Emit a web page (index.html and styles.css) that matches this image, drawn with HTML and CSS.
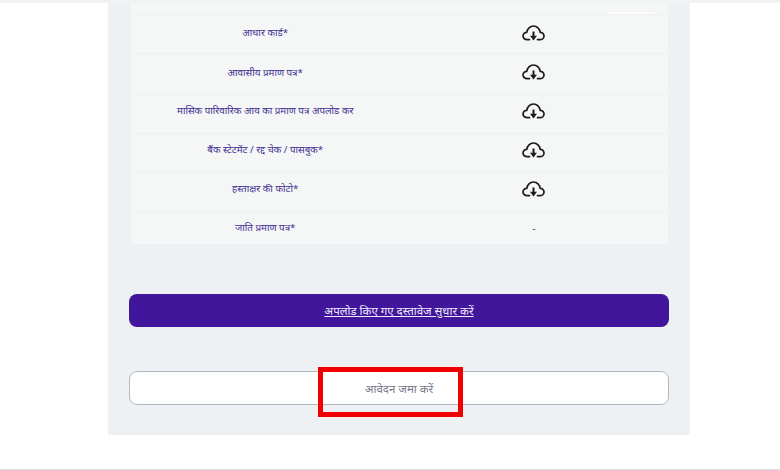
FILE: index.html
```html
<!DOCTYPE html>
<html lang="hi">
<head>
<meta charset="utf-8">
<title>दस्तावेज़</title>
<link rel="stylesheet" href="styles.css">
</head>
<body>
<svg class="defs" width="0" height="0" aria-hidden="true">
  <symbol id="cloud" viewBox="0 0 23 17">
    <path d="M7.5 14.6H5.2C2.7 14.6 1 12.9 1 10.9C1 8.8 2.7 7.2 4.9 7.3C5.2 3.7 8 1 11.5 1C15 1 17.8 3.7 18.1 7.3C20.3 7.2 22 8.8 22 10.9C22 12.9 20.3 14.6 17.8 14.6H15.5" fill="none" stroke="#1c1c1c" stroke-width="1.7" stroke-linecap="round" stroke-linejoin="round"/>
    <path d="M11.5 6.5V12" fill="none" stroke="#1c1c1c" stroke-width="2"/>
    <path d="M8 10.8H15L11.5 15.4Z" fill="#1c1c1c"/>
  </symbol>
</svg>
<div class="topline"></div>
<main class="panel">
  <section class="table">
    <div class="head"><span class="head-mark"></span></div>
    <div class="row r1"><div class="label">आधार कार्ड*</div><div class="value"><svg class="icon"><use href="#cloud"/></svg></div></div>
    <div class="row r2"><div class="label">आवासीय प्रमाण पत्र*</div><div class="value"><svg class="icon"><use href="#cloud"/></svg></div></div>
    <div class="row"><div class="label">मासिक पारिवारिक आय का प्रमाण पत्र अपलोड कर</div><div class="value"><svg class="icon"><use href="#cloud"/></svg></div></div>
    <div class="row"><div class="label">बैंक स्टेटमेंट / रद्द चेक / पासबुक*</div><div class="value"><svg class="icon"><use href="#cloud"/></svg></div></div>
    <div class="row"><div class="label">हस्ताक्षर की फोटो*</div><div class="value"><svg class="icon"><use href="#cloud"/></svg></div></div>
    <div class="row last"><div class="label">जाति प्रमाण पत्र*</div><div class="value dash">-</div></div>
  </section>
  <a class="btn primary" href="#">अपलोड किए गए दस्तावेज सुधार करें</a>
  <div class="submit-wrap">
    <button class="btn outline" type="button">आवेदन जमा करें</button>
    <div class="highlight"></div>
  </div>
</main>
</body>
</html>
```
FILE: styles.css
```css
* { box-sizing: border-box; }
html, body { margin: 0; padding: 0; }
body {
  width: 780px;
  height: 470px;
  overflow: hidden;
  background: #fff;
  border-bottom: 1px solid #d9dbe0;
  font-family: "Noto Sans", "Noto Sans Devanagari", "Lohit Devanagari", "Liberation Sans", sans-serif;
}
.defs { position: absolute; }
.topline { height: 3px; background: #f1f2f3; }
.panel {
  width: 582px;
  height: 432px;
  margin-left: 108px;
  padding: 0 21px;
  background: #edf1f4;
}
.table {
  margin: 0 1px 0 2px;
  background: #f5f6f6;
  height: 241px;
}
.head {
  display: flex;
  justify-content: flex-end;
  align-items: flex-end;
  height: 11px;
  padding-right: 13px;
}
.head-mark { width: 50px; height: 1px; background: #fdfdfd; }
.row {
  display: grid;
  grid-template-columns: 1fr 1fr;
  align-items: center;
  height: 39px;
  padding-bottom: 6px;
  border-top: 1px solid #eeefef;
}
.row.r1 { height: 39px; padding-bottom: 2px; }
.row.r2 { height: 41px; padding-bottom: 3px; }
.row.last { height: 33px; padding-bottom: 0; }
.label {
  text-align: center;
  font-size: 9.8px;
  line-height: 14px;
  color: #3f2f94;
}
.value { display: flex; justify-content: center; align-items: center; }
.dash { font-size: 10px; color: #555; }
.icon { width: 23px; height: 17px; display: block; }
.btn {
  display: flex;
  justify-content: center;
  align-items: center;
  width: 100%;
  height: 33px;
  border-radius: 8px;
  font-family: inherit;
  font-size: 11.5px;
}
.primary {
  margin-top: 50px;
  background: #42169b;
  color: #efe9fb;
  text-decoration: underline;
}
.submit-wrap { position: relative; margin-top: 44px; }
.outline {
  height: 34px;
  background: #fff;
  border: 1px solid #b4b7c4;
  color: #77778a;
  font-size: 11.5px;
}
.highlight {
  position: absolute;
  left: 189px;
  top: -4px;
  width: 145px;
  height: 50px;
  border: 5px solid #f00000;
}
```
